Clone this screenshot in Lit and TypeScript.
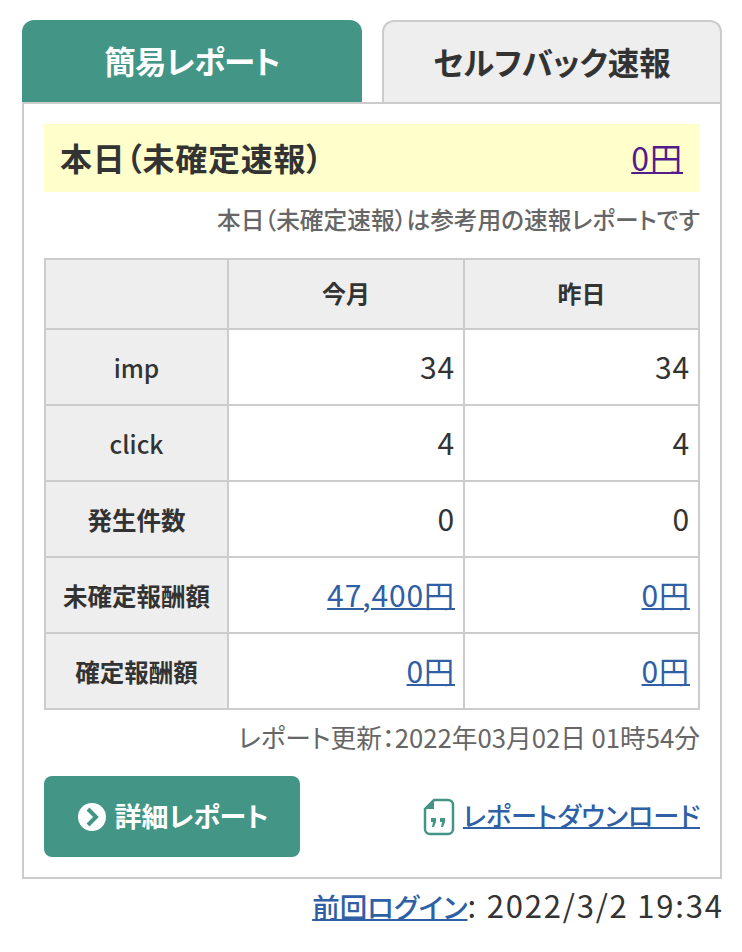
import { LitElement, html, css } from "lit";
import { customElement } from "lit/decorators.js";

@customElement("app-root")
export class AppRoot extends LitElement {
  static styles = css`
    :host {
      display: block;
      font-family: "Noto Sans CJK JP", "Noto Sans", sans-serif;
      color: #333;
      font-feature-settings: "palt";
      background: #fff;
      min-height: 952px;
    }
    .wrap { padding: 20px 20px 0 22px; }
    .tabs { display: flex; justify-content: space-between; height: 82px; }
    .tab {
      width: 340px;
      box-sizing: border-box;
      border-radius: 12px 12px 0 0;
      display: flex;
      align-items: center;
      justify-content: center;
      font-size: 31.5px;
      font-weight: 700;
      padding-bottom: 2px;
    }
    .tab.on { background: #439686; color: #fff; letter-spacing: -0.7px; }
    .tab.off { background: #eee; border: 2px solid #ccc; border-bottom: 0; }
    .panel {
      border: 2px solid #ccc;
      padding: 20px;
      height: 777px;
      box-sizing: border-box;
    }
    .today {
      background: #ffc;
      height: 68px;
      box-sizing: border-box;
      display: flex;
      align-items: center;
      justify-content: space-between;
      padding: 0 17px 3px 16px;
      font-size: 32px;
      font-weight: 700;
    }
    .today .label { letter-spacing: 0.8px; }
    .today a {
      color: #551a8b;
      font-weight: 400;
      letter-spacing: 1px;
      text-decoration: underline;
      text-decoration-thickness: 2px;
    }
    .note {
      text-align: right;
      font-size: 23.7px;
      font-weight: 500;
      color: #666;
      line-height: 32px;
      margin: 11px 0 23px;
    }
    table {
      width: 656px;
      border-collapse: collapse;
      table-layout: fixed;
    }
    .c1 { width: 183px; }
    .c2 { width: 236px; }
    .c3 { width: 235px; }
    th, td { border: 2px solid #ccc; padding: 0; }
    th {
      background: #eee;
      font-weight: 700;
      text-align: center;
      font-size: 24.5px;
    }
    thead th { height: 65px; font-size: 24px; padding-bottom: 3px; }
    tbody th { height: 74px; }
    tbody th.en { font-size: 24.5px; font-weight: 500; }
    td {
      height: 72px;
      text-align: right;
      padding: 0 8px 2px 0;
      font-size: 30px;
      font-weight: 400;
      letter-spacing: 0.9px;
    }
    td a, .dl a, .login a {
      color: #2f5fa5;
      text-decoration: underline;
      text-decoration-thickness: 2px;
    }
    .updated {
      text-align: right;
      font-size: 25.7px;
      font-weight: 400;
      color: #666;
      line-height: 34px;
      margin: 10px 0 22px;
    }
    .actions { display: flex; justify-content: space-between; align-items: center; }
    .btn {
      width: 256px;
      height: 81px;
      box-sizing: border-box;
      padding-left: 3px;
      background: #439686;
      color: #fff;
      border-radius: 8px;
      display: flex;
      align-items: center;
      justify-content: center;
      gap: 8px;
      font-size: 27px;
      font-weight: 700;
    }
    .btn span { padding-bottom: 3px; }
    .dl {
      display: flex;
      align-items: center;
      gap: 8px;
      font-size: 26.2px;
      font-weight: 500;
    }
    .dl a { padding-bottom: 3px; }
    .login {
      text-align: right;
      font-size: 31px;
      line-height: 44px;
      margin-top: 4px;
      font-weight: 400;
    }
    .login .when { letter-spacing: 1.8px; margin-right: -1.8px; }
    .login a { font-size: 27.5px; font-weight: 500; }
    svg { display: block; }
  `;

  render() {
    const rows: [string, boolean, unknown, unknown][] = [
      ["imp", true, "34", "34"],
      ["click", true, "4", "4"],
      ["発生件数", false, "0", "0"],
      ["未確定報酬額", false, html`<a>47,400円</a>`, html`<a>0円</a>`],
      ["確定報酬額", false, html`<a>0円</a>`, html`<a>0円</a>`],
    ];
    return html`
      <div class="wrap">
        <div class="tabs">
          <div class="tab on">簡易レポート</div>
          <div class="tab off">セルフバック速報</div>
        </div>
        <div class="panel">
          <div class="today"><span class="label">本日（未確定速報）</span><a>0円</a></div>
          <div class="note">本日（未確定速報）は参考用の速報レポートです</div>
          <table>
            <colgroup><col class="c1" /><col class="c2" /><col class="c3" /></colgroup>
            <thead><tr><th></th><th>今月</th><th>昨日</th></tr></thead>
            <tbody>
              ${rows.map(
                ([h, en, a, b]) => html`<tr><th class=${en ? "en" : ""}>${h}</th><td>${a}</td><td>${b}</td></tr>`
              )}
            </tbody>
          </table>
          <div class="updated">レポート更新：2022年03月02日 01時54分</div>
          <div class="actions">
            <div class="btn">
              <svg width="28" height="28" viewBox="0 0 28 28"><circle cx="14" cy="14" r="14" fill="#fff"/><path d="M10 6l8 8-8 8" fill="none" stroke="#439686" stroke-width="4"/></svg>
              <span>詳細レポート</span>
            </div>
            <div class="dl">
              <svg width="32" height="38" viewBox="0 0 32 38">
                <path d="M11 2h14a5 5 0 0 1 5 5v24a5 5 0 0 1-5 5H7a5 5 0 0 1-5-5V11z" fill="#fff" stroke="#439686" stroke-width="2.5"/>
                <path d="M11 2v9H2z" fill="#439686"/>
                <path d="M8 20h5v4l-2 5H9l1-5H8zM17 20h5v4l-2 5h-2l1-5h-2z" fill="#439686"/>
              </svg>
              <a>レポートダウンロード</a>
            </div>
          </div>
        </div>
        <div class="login"><a>前回ログイン</a><span class="when">: 2022/3/2 19:34</span></div>
      </div>
    `;
  }
}
